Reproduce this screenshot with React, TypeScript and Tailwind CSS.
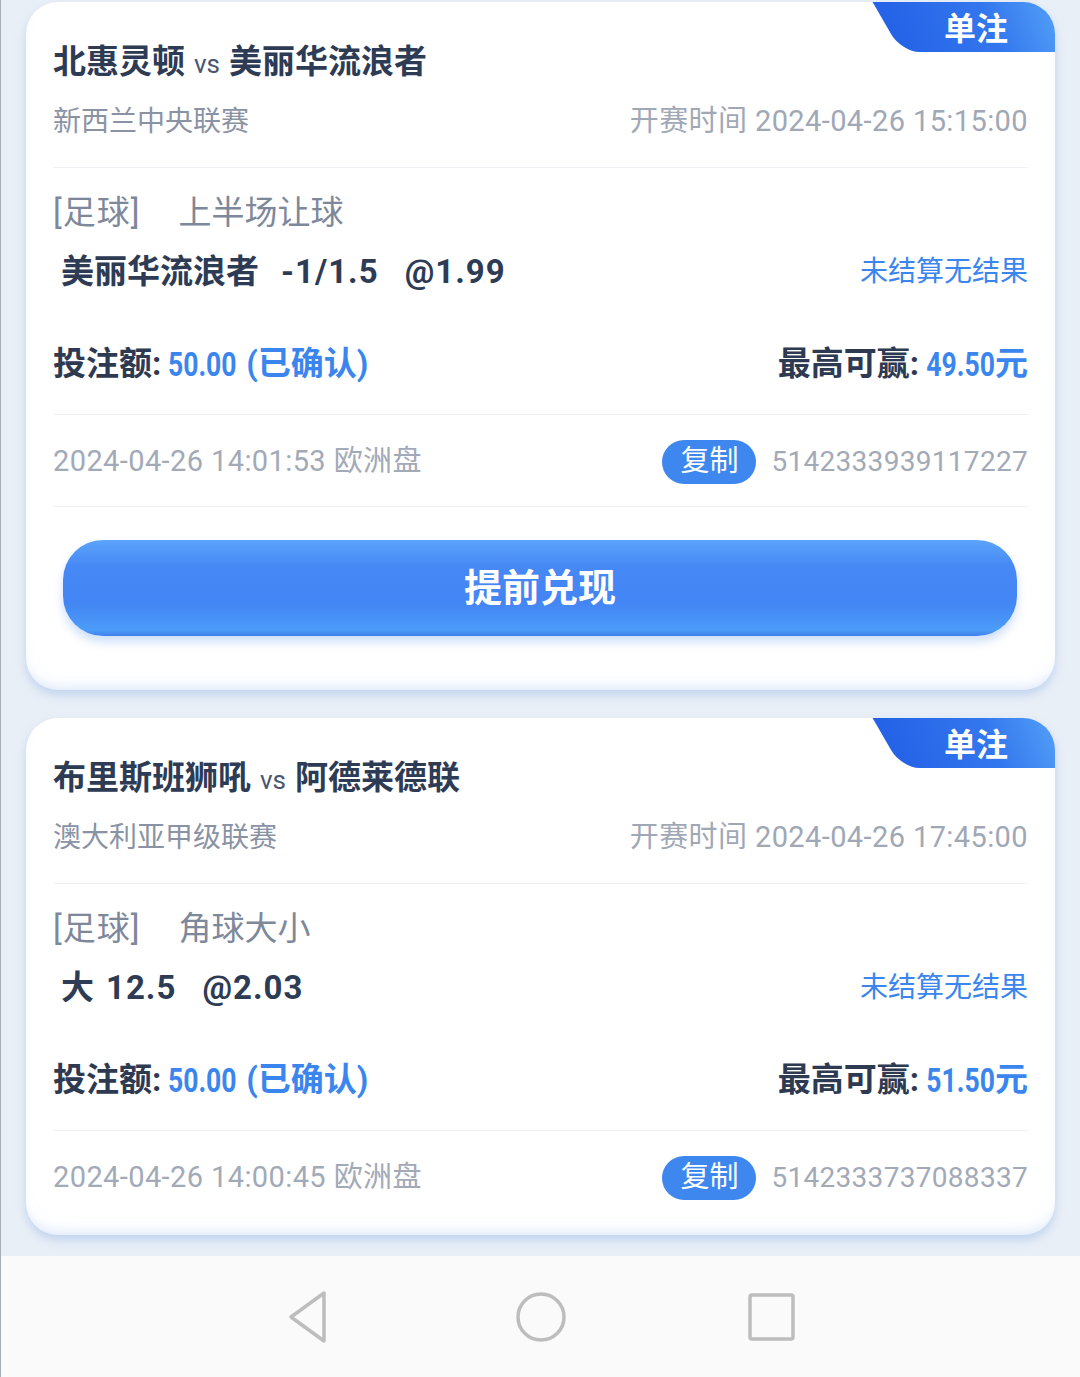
import React from "react";

type Bet = {
  home: string;
  away: string;
  league: string;
  start: string;
  market: string;
  name: string;
  nameGap: string;
  line: string;
  odds: string;
  stake: string;
  maxWin: string;
  placed: string;
  orderNo: string;
  cashout: boolean;
};

const bets: Bet[] = [
  {
    home: "北惠灵顿",
    away: "美丽华流浪者",
    league: "新西兰中央联赛",
    start: "开赛时间 2024-04-26 15:15:00",
    market: "上半场让球",
    name: "美丽华流浪者",
    nameGap: "ml-[22px]",
    line: "-1/1.5",
    odds: "@1.99",
    stake: "50.00",
    maxWin: "49.50",
    placed: "2024-04-26 14:01:53 欧洲盘",
    orderNo: "5142333939117227",
    cashout: true,
  },
  {
    home: "布里斯班狮吼",
    away: "阿德莱德联",
    league: "澳大利亚甲级联赛",
    start: "开赛时间 2024-04-26 17:45:00",
    market: "角球大小",
    name: "大",
    nameGap: "ml-[12px]",
    line: "12.5",
    odds: "@2.03",
    stake: "50.00",
    maxWin: "51.50",
    placed: "2024-04-26 14:00:45 欧洲盘",
    orderNo: "5142333737088337",
    cashout: false,
  },
];

function Badge() {
  return (
    <div className="absolute top-0 right-0 h-[50px] w-[180px]">
      <div className="absolute inset-y-0 left-[12px] right-[-40px] skew-x-[30deg] rounded-bl-[18px] bg-[linear-gradient(100deg,#2461e6_0%,#3377ee_50%,#62b2fb_100%)]" />
      <div className="relative flex h-full items-center justify-center pl-[22px] pt-[4px] text-[32px] font-bold text-white">
        单注
      </div>
    </div>
  );
}

function Card({ b }: { b: Bet }) {
  return (
    <div
      className={`relative overflow-hidden rounded-[32px] bg-white px-[27px] pt-[38px] shadow-[0_5px_10px_rgba(160,190,230,0.55),inset_0_-10px_14px_-8px_rgba(185,210,245,0.55)] ${
        b.cashout ? "pb-[54px]" : "pb-[35px]"
      }`}
    >
      <Badge />
      <div className="flex h-[44px] items-center text-[33px] font-bold text-[#2e3b55]">
        <span>{b.home}</span>
        <span className="px-[9px] pt-[4px] text-[26px] font-normal text-[#4a5670]">vs</span>
        <span>{b.away}</span>
      </div>
      <div className="mt-[22px] flex h-[32px] items-center justify-between">
        <span className="text-[28px] text-[#8a93a4]">{b.league}</span>
        <span className="text-[29px] tracking-[0.4px] text-[#a0a8b6]">{b.start}</span>
      </div>
      <div className="mt-[29px] h-px bg-[#eef0f4]" />
      <div className="mt-[25px] flex h-[40px] items-center text-[33px] text-[#7e889b]">
        <span className="tracking-[1px]">[足球]</span>
        <span className="ml-[38px]">{b.market}</span>
      </div>
      <div className="mt-[19px] flex h-[40px] items-center justify-between">
        <span className="flex items-center pl-[8px] text-[33px] font-bold text-[#2e3b55]">
          <span>{b.name}</span>
          <span className={`${b.nameGap} tracking-[1px]`}>{b.line}</span>
          <span className="ml-[26px] tracking-[1px]">{b.odds}</span>
        </span>
        <span className="text-[28px] text-[#3b86ee]">未结算无结果</span>
      </div>
      <div className="mt-[50px] flex h-[44px] items-center justify-between text-[33px] font-bold">
        <span className="flex items-center text-[#2e3a52]">
          <span>投注额:</span>
          <span className="ml-[7px] mr-[-19px] inline-block origin-left scale-x-[0.78] text-[34px] text-[#3b86ee]">
            {b.stake}
          </span>
          <span className="ml-[9px] text-[#3b86ee]">(已确认)</span>
        </span>
        <span className="flex items-center text-[#2e3a52]">
          <span>最高可赢:</span>
          <span className="ml-[-12px] inline-block origin-right scale-x-[0.78] text-[34px] text-[#3b86ee]">
            {b.maxWin}
          </span>
          <span className="text-[#3b86ee]">元</span>
        </span>
      </div>
      <div className="mt-[28px] h-px bg-[#eef0f4]" />
      <div className="mt-[25px] flex h-[44px] items-center justify-between">
        <span className="text-[29px] tracking-[0.4px] text-[#a2aab8]">{b.placed}</span>
        <div className="flex items-center">
          <span className="flex h-[44px] w-[94px] items-center justify-center rounded-full bg-[#3d87ef] text-[29px] text-white">
            复制
          </span>
          <span className="ml-[15px] text-[28px] tracking-[0.3px] text-[#a2aab8]">{b.orderNo}</span>
        </div>
      </div>
      {b.cashout && (
        <>
          <div className="mt-[22px] h-px bg-[#eef0f4]" />
          <div className="ml-[10px] mr-[11px] mt-[33px] flex h-[96px] items-center justify-center rounded-[40px] bg-[linear-gradient(180deg,#5ba4fb_0%,#4688f5_28%,#4385f4_65%,#4b9cf9_94%,#3f80ea_100%)] text-[38px] font-bold text-white shadow-[0_6px_10px_rgba(80,140,235,0.28)]">
            提前兑现
          </div>
        </>
      )}
    </div>
  );
}

export default function App() {
  return (
    <div className="flex h-[1377px] w-[1080px] flex-col overflow-hidden border-l border-[#a9aeb6] bg-[#e9eff7] font-['Roboto','Noto_Sans_CJK_SC',sans-serif]">
      <div className="flex flex-1 flex-col gap-[28px] px-[25px] pt-[2px]">
        {bets.map((b) => (
          <Card key={b.orderNo} b={b} />
        ))}
      </div>
      <div className="flex h-[121px] items-center justify-center gap-[181px] bg-[#fafafa]">
        <svg width="50" height="54" viewBox="0 0 50 54" fill="none" stroke="#bdbdbd" strokeWidth="3.5" strokeLinejoin="round">
          <path d="M39 3 L39 51 L6 27 Z" />
        </svg>
        <svg width="50" height="54" viewBox="0 0 50 54" fill="none" stroke="#bdbdbd" strokeWidth="3.5">
          <circle cx="25" cy="27" r="23" />
        </svg>
        <svg width="50" height="54" viewBox="0 0 50 54" fill="none" stroke="#bdbdbd" strokeWidth="3.5">
          <rect x="3" y="5" width="43" height="44" rx="2" />
        </svg>
      </div>
    </div>
  );
}
